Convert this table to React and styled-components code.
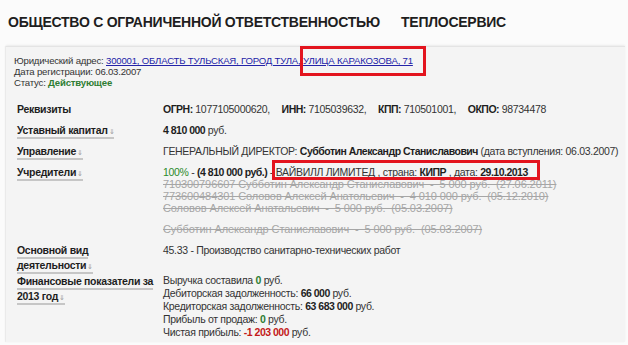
import styled, { createGlobalStyle } from "styled-components";

const GlobalStyle = createGlobalStyle`
  body {
    margin: 0;
    background: #fbfbfb;
    font-family: "Liberation Sans", Arial, sans-serif;
    color: #222;
  }
`;

const Page = styled.div`
  width: 628px;
  height: 345px;
  overflow: hidden;
  padding: 13px 3px 0 6px;
  box-sizing: border-box;
  display: flex;
  flex-direction: column;
`;

const Title = styled.h1`
  margin: 0 0 15px 2px;
  font-size: 14px;
  line-height: 18px;
  letter-spacing: -0.25px;
  font-weight: bold;
  color: #1e1e1e;
  display: flex;
  gap: 21px;
`;

const Panel = styled.div`
  flex: 1;
  background: #f4f4f4;
  border-top: 1px solid #e4e4e4;
  box-shadow: 0 -1px 2px rgba(0, 0, 0, 0.06), -1px 0 1px rgba(0, 0, 0, 0.05);
  padding: 8px 8px 0 8px;
  margin-bottom: 3px;
`;

const Meta = styled.div`
  font-size: 9.6px;
  line-height: 11px;
  letter-spacing: -0.2px;
  color: #333;
`;

const Link = styled.a`
  color: #2323a8;
  text-decoration: underline;
`;

const Green = styled.span`
  color: ${(p) => (p.$bold ? "#2e7d32" : "#2a8a2a")};
  font-weight: ${(p) => (p.$bold ? "bold" : "normal")};
`;

const Red = styled.span`
  color: #c31a1a;
  font-weight: bold;
  letter-spacing: -0.5px;
`;

const Highlight = styled.span`
  position: relative;
  &::after {
    content: "";
    position: absolute;
    top: ${(p) => p.$top}px;
    bottom: ${(p) => p.$bottom}px;
    left: ${(p) => p.$left}px;
    right: ${(p) => p.$right}px;
    border: 3px solid #e3141e;
  }
`;

const Table = styled.div`
  display: grid;
  grid-template-columns: 146px 1fr;
  grid-auto-rows: minmax(21px, auto);
  margin-top: 14px;
  padding-left: 3px;
`;

const Label = styled.div`
  font-size: 10.5px;
  font-weight: bold;
  line-height: 15px;
  letter-spacing: -0.3px;
  white-space: nowrap;
  color: #1e1e1e;
  & span {
    border-bottom: 2px solid #c6c6c6;
    padding-bottom: 1px;
  }
`;

const Arrow = styled.i`
  font-style: normal;
  font-weight: normal;
  font-size: 7px;
  color: #9a9a9a;
  margin-left: 1px;
`;

const Value = styled.div`
  font-size: 10.5px;
  line-height: 15px;
  letter-spacing: -0.3px;
  white-space: nowrap;
  color: #333;
  & b {
    color: #1e1e1e;
    letter-spacing: -0.5px;
  }
`;

const Sep = styled.span`
  margin-left: 9px;
`;

const History = styled.div`
  margin-top: -2.5px;
  padding-bottom: 8.5px;
  font-size: 11px;
  line-height: 12px;
  letter-spacing: -0.1px;
  color: #a6a6a6;
  text-decoration: line-through;
`;

const Gap = styled.div`
  height: ${(p) => p.$h}px;
`;

const Lines = styled.div`
  line-height: 13px;
`;

function RowLabel({ children, lines }) {
  return (
    <Label>
      {lines ? (
        lines.map((l, i) => (
          <div key={i}>
            <span>
              {l}
              {i === lines.length - 1 && <Arrow>⇓</Arrow>}
            </span>
          </div>
        ))
      ) : (
        <span>
          {children}
          <Arrow>⇓</Arrow>
        </span>
      )}
    </Label>
  );
}

export default function App() {
  return (
    <>
      <GlobalStyle />
      <Page>
        <Title>
          <span>ОБЩЕСТВО С ОГРАНИЧЕННОЙ ОТВЕТСТВЕННОСТЬЮ</span>
          <span>ТЕПЛОСЕРВИС</span>
        </Title>
        <Panel>
          <Meta>
            Юридический адрес:{" "}
            <Link href="#">
              300001, ОБЛАСТЬ ТУЛЬСКАЯ, ГОРОД ТУЛА,{" "}
              <Highlight $top={-9.5} $bottom={-9.5} $left={-3} $right={-13}>
                УЛИЦА КАРАКОЗОВА, 71
              </Highlight>
            </Link>
            <br />
            Дата регистрации: 06.03.2007
            <br />
            Статус: <Green $bold>Действующее</Green>
          </Meta>
          <Table>
            <Label>Реквизиты</Label>
            <Value>
              <b>ОГРН:</b> 1077105000620, <Sep />
              <b>ИНН:</b> 7105039632, <Sep />
              <b>КПП:</b> 710501001, <Sep />
              <b>ОКПО:</b> 98734478
            </Value>

            <RowLabel>Уставный капитал</RowLabel>
            <Value>
              <b>4 810 000</b> руб.
            </Value>

            <RowLabel>Управление</RowLabel>
            <Value>
              ГЕНЕРАЛЬНЫЙ ДИРЕКТОР: <b>Субботин Александр Станиславович</b>{" "}
              (дата вступления: 06.03.2007)
            </Value>

            <RowLabel>Учредители</RowLabel>
            <Value>
              <Green>100%</Green> - <b>(4 810 000 руб.)</b> -{" "}
              <Highlight $top={-6} $bottom={-2} $left={-4} $right={-12}>
                ВАЙВИЛЛ ЛИМИТЕД , страна: <b>КИПР</b> , дата: <b>29.10.2013</b>
              </Highlight>
              <History>
                <div>710300796607 Субботин Александр Станиславович &nbsp;-&nbsp; 5 000 руб. &nbsp;(27.06.2011)</div>
                <div>773600484301 Соловов Алексей Анатольевич &nbsp;-&nbsp; 4 010 000 руб. &nbsp;(05.12.2010)</div>
                <div>Соловов Алексей Анатальевич &nbsp;-&nbsp; 5 000 руб. &nbsp;(05.03.2007)</div>
                <Gap $h={9} />
                <div>Субботин Александр Станиславович &nbsp;-&nbsp; 5 000 руб. &nbsp;(05.03.2007)</div>
              </History>
            </Value>

            <RowLabel lines={["Основной вид", "деятельности"]} />
            <Value>45.33 - Производство санитарно-технических работ</Value>

            <RowLabel lines={["Финансовые показатели за", "2013 год"]} />
            <Value>
              <Lines>
                Выручка составила <Green $bold>0</Green> руб.
                <br />
                Дебиторская задолженность: <b>66 000</b> руб.
                <br />
                Кредиторская задолженность: <b>63 683 000</b> руб.
                <br />
                Прибыль от продаж: <Green $bold>0</Green> руб.
                <br />
                Чистая прибыль: <Red>-1 203 000</Red> руб.
              </Lines>
            </Value>
          </Table>
        </Panel>
      </Page>
    </>
  );
}
